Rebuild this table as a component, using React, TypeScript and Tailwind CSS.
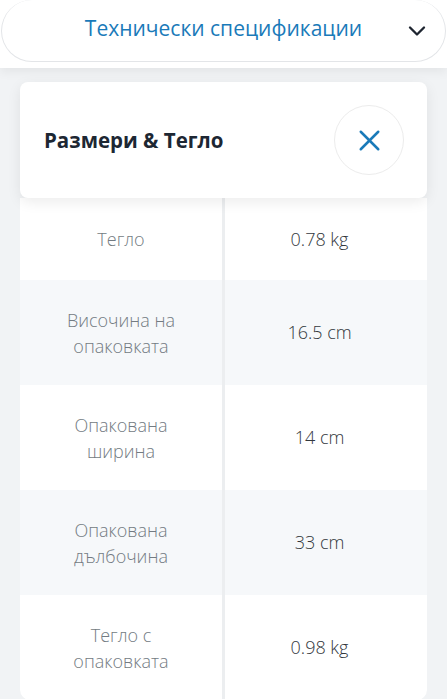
import { X, ChevronDown } from "lucide-react";

const rows = [
    { label: "Тегло", value: "0.78 kg" },
    { label: "Височина на опаковката", value: "16.5 cm" },
    { label: "Опакована ширина", value: "14 cm" },
    { label: "Опакована дълбочина", value: "33 cm" },
    { label: "Тегло с опаковката", value: "0.98 kg" },
];

export default function App() {
    return (
        <div className="w-[447px] h-[699px] overflow-hidden bg-[#f1f3f5] font-['Open_Sans',sans-serif]">
            {/* Header pill */}
            <div className="bg-white pb-[6px] shadow-[0_4px_10px_rgba(0,0,0,0.06)] relative z-10">
                <div className="h-[62px] mx-[1px] rounded-[40px] border border-[#e3e5e8] border-t-0 flex items-center relative">
                    <span className="flex-1 text-center text-[21px] text-[#1a7ab9] pb-[4px]">Технически спецификации</span>
                    <ChevronDown className="absolute right-[14px] top-[17px] text-[#1e2530]" size={28} strokeWidth={2} />
                </div>
            </div>

            <div className="px-[20px] pt-[14px]">
                {/* Section card */}
                <div className="relative z-10 bg-white rounded-[8px] shadow-[0_4px_14px_rgba(0,0,0,0.08)] h-[116px] flex items-center justify-between pl-[24px] pr-[23px]">
                    <h2 className="text-[20.5px] font-bold text-[#1d2733]">Размери &amp; Тегло</h2>
                    <button className="w-[70px] h-[70px] rounded-full border border-[#ececec] flex items-center justify-center text-[#1a7ab9]">
                        <X size={35} strokeWidth={1.7} />
                    </button>
                </div>

                {/* Table */}
                <div className="rounded-b-[10px] overflow-hidden bg-[#eceef0]">
                    {rows.map((row, i) => (
                        <div
                            key={row.label}
                            className={`grid grid-cols-[202px_203px] gap-x-[3px] ${i === 0 ? "h-[82px]" : "h-[105px]"}`}
                        >
                            <div className={`flex items-center justify-center text-center px-[30px] text-[18px] leading-[26px] font-light text-[#737b82] ${i % 2 === 1 ? "bg-[#f6f8fa]" : "bg-white"}`}>
                                {row.label}
                            </div>
                            <div className={`flex items-center justify-center pr-[14px] text-[18px] font-light text-[#33383d] ${i % 2 === 1 ? "bg-[#f6f8fa]" : "bg-white"}`}>
                                {row.value}
                            </div>
                        </div>
                    ))}
                </div>
            </div>
        </div>
    );
}
